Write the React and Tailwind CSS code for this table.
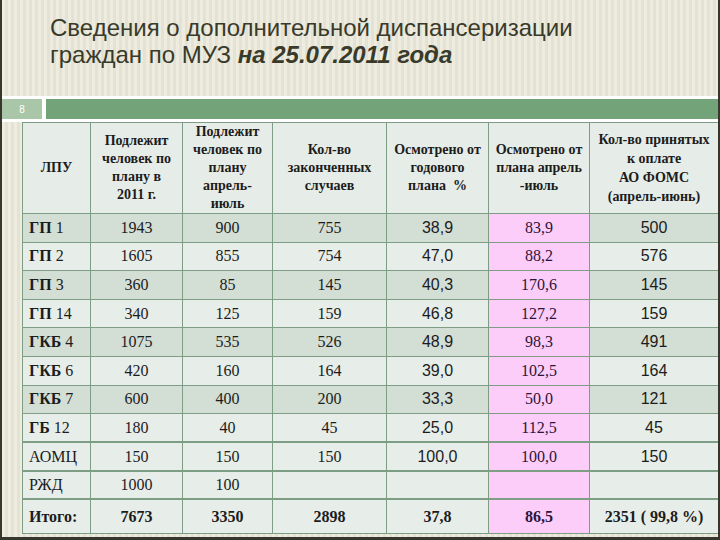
const ROWS = [
  { b: 'ГП', n: ' 1', v: ['1943', '900', '755', '38,9', '83,9', '500'], dark: true },
  { b: 'ГП', n: ' 2', v: ['1605', '855', '754', '47,0', '88,2', '576'] },
  { b: 'ГП', n: ' 3', v: ['360', '85', '145', '40,3', '170,6', '145'], dark: true },
  { b: 'ГП', n: ' 14', v: ['340', '125', '159', '46,8', '127,2', '159'] },
  { b: 'ГКБ', n: ' 4', v: ['1075', '535', '526', '48,9', '98,3', '491'], dark: true },
  { b: 'ГКБ', n: ' 6', v: ['420', '160', '164', '39,0', '102,5', '164'] },
  { b: 'ГКБ', n: ' 7', v: ['600', '400', '200', '33,3', '50,0', '121'], dark: true },
  { b: 'ГБ', n: ' 12', v: ['180', '40', '45', '25,0', '112,5', '45'], thick: true },
  { b: '', n: 'АОМЦ', v: ['150', '150', '150', '100,0', '100,0', '150'], thick: true },
  { b: '', n: 'РЖД', v: ['1000', '100', '', '', '', ''], thick: true },
];

const serif = "font-['Liberation_Serif',serif]";
const sans = "font-['Liberation_Sans',Arial,sans-serif]";

export default function App() {
  return (
    <div className="w-[720px] h-[540px] flex flex-col border-l-2 border-r-2 border-b-[3px] border-[#36362c] bg-[repeating-linear-gradient(90deg,#edecdf_0px,#edecdf_3px,#e3e2d4_3px,#e3e2d4_6px)] overflow-hidden">
      {/* Title */}
      <div className={`h-[96px] pl-[48px] pt-[14px] text-[24px] leading-[27px] text-[#393a2a] ${sans}`}>
        <p>Сведения о дополнительной диспансеризации</p>
        <p>
          граждан по МУЗ <span className="font-bold italic">на 25.07.2011 года</span>
        </p>
      </div>

      {/* Band */}
      <div className="h-[3px] bg-white" />
      <div className="h-[20px] flex">
        <div className={`w-[40px] bg-[#a9c6a8] text-white text-[10px] flex items-center justify-center ${sans}`}>8</div>
        <div className="w-[4px] bg-white" />
        <div className="flex-1 bg-[#73a479]" />
      </div>
      <div className="h-[3px] bg-white" />

      {/* Table */}
      <div className="flex-1 pl-[20px]">
        <table className="w-[696px] table-fixed border-collapse text-[#1c1c1c]">
          <colgroup>
            <col className="w-[68px]" />
            <col className="w-[92px]" />
            <col className="w-[90px]" />
            <col className="w-[114px]" />
            <col className="w-[102px]" />
            <col className="w-[101px]" />
            <col className="w-[129px]" />
          </colgroup>
          <thead>
            <tr className={`h-[91px] bg-[#e6ece7] text-[14px] leading-[18px] font-bold ${serif}`}>
              <th className="border border-[#7d9d85] font-bold">ЛПУ</th>
              <th className="border border-[#7d9d85] font-bold">Подлежит<br />человек по<br />плану в<br />2011 г.</th>
              <th className="border border-[#7d9d85] font-bold">Подлежит<br />человек по<br />плану<br />апрель-<br />июль</th>
              <th className="border border-[#7d9d85] font-bold">Кол-во<br />законченных<br />случаев</th>
              <th className="border border-[#7d9d85] font-bold">Осмотрено от<br />годового<br />плана&nbsp; %</th>
              <th className="border border-[#7d9d85] font-bold">Осмотрено от<br />плана апрель<br />-июль</th>
              <th className="border border-[#7d9d85] font-bold leading-[19px]">Кол-во принятых<br />к оплате<br />АО ФОМС<br />(апрель-июнь)</th>
            </tr>
          </thead>
          <tbody>
            {ROWS.map((r, i) => (
              <tr key={i} className={`h-[28.6px] ${r.dark ? 'bg-[#d3ded5]' : 'bg-[#e7ede8]'}`}>
                <td className={`border border-[#7d9d85] ${r.thick ? 'border-b-2' : ''} pl-[6px] text-[16px] ${serif}`}>
                  <span className="font-bold">{r.b}</span>{r.n}
                </td>
                {r.v.map((v, j) => (
                  <td
                    key={j}
                    className={`border border-[#7d9d85] ${r.thick ? 'border-b-2' : ''} text-center text-[16px] ${
                      j === 4 ? `bg-[#fdcdf9] text-[#2e1438] ${serif}` : j >= 3 ? sans : serif
                    }`}
                  >
                    {v}
                  </td>
                ))}
              </tr>
            ))}
            <tr className={`h-[34px] bg-[#e7ede8] text-[16px] font-bold ${serif}`}>
              <td className="border border-[#7d9d85] pl-[6px]">Итого:</td>
              <td className="border border-[#7d9d85] text-center">7673</td>
              <td className="border border-[#7d9d85] text-center">3350</td>
              <td className="border border-[#7d9d85] text-center">2898</td>
              <td className="border border-[#7d9d85] text-center">37,8</td>
              <td className="border border-[#7d9d85] text-center bg-[#fdcdf9] text-[#2e1438]">86,5</td>
              <td className="border border-[#7d9d85] text-center">2351 ( 99,8 %)</td>
            </tr>
          </tbody>
        </table>
      </div>
    </div>
  );
}
